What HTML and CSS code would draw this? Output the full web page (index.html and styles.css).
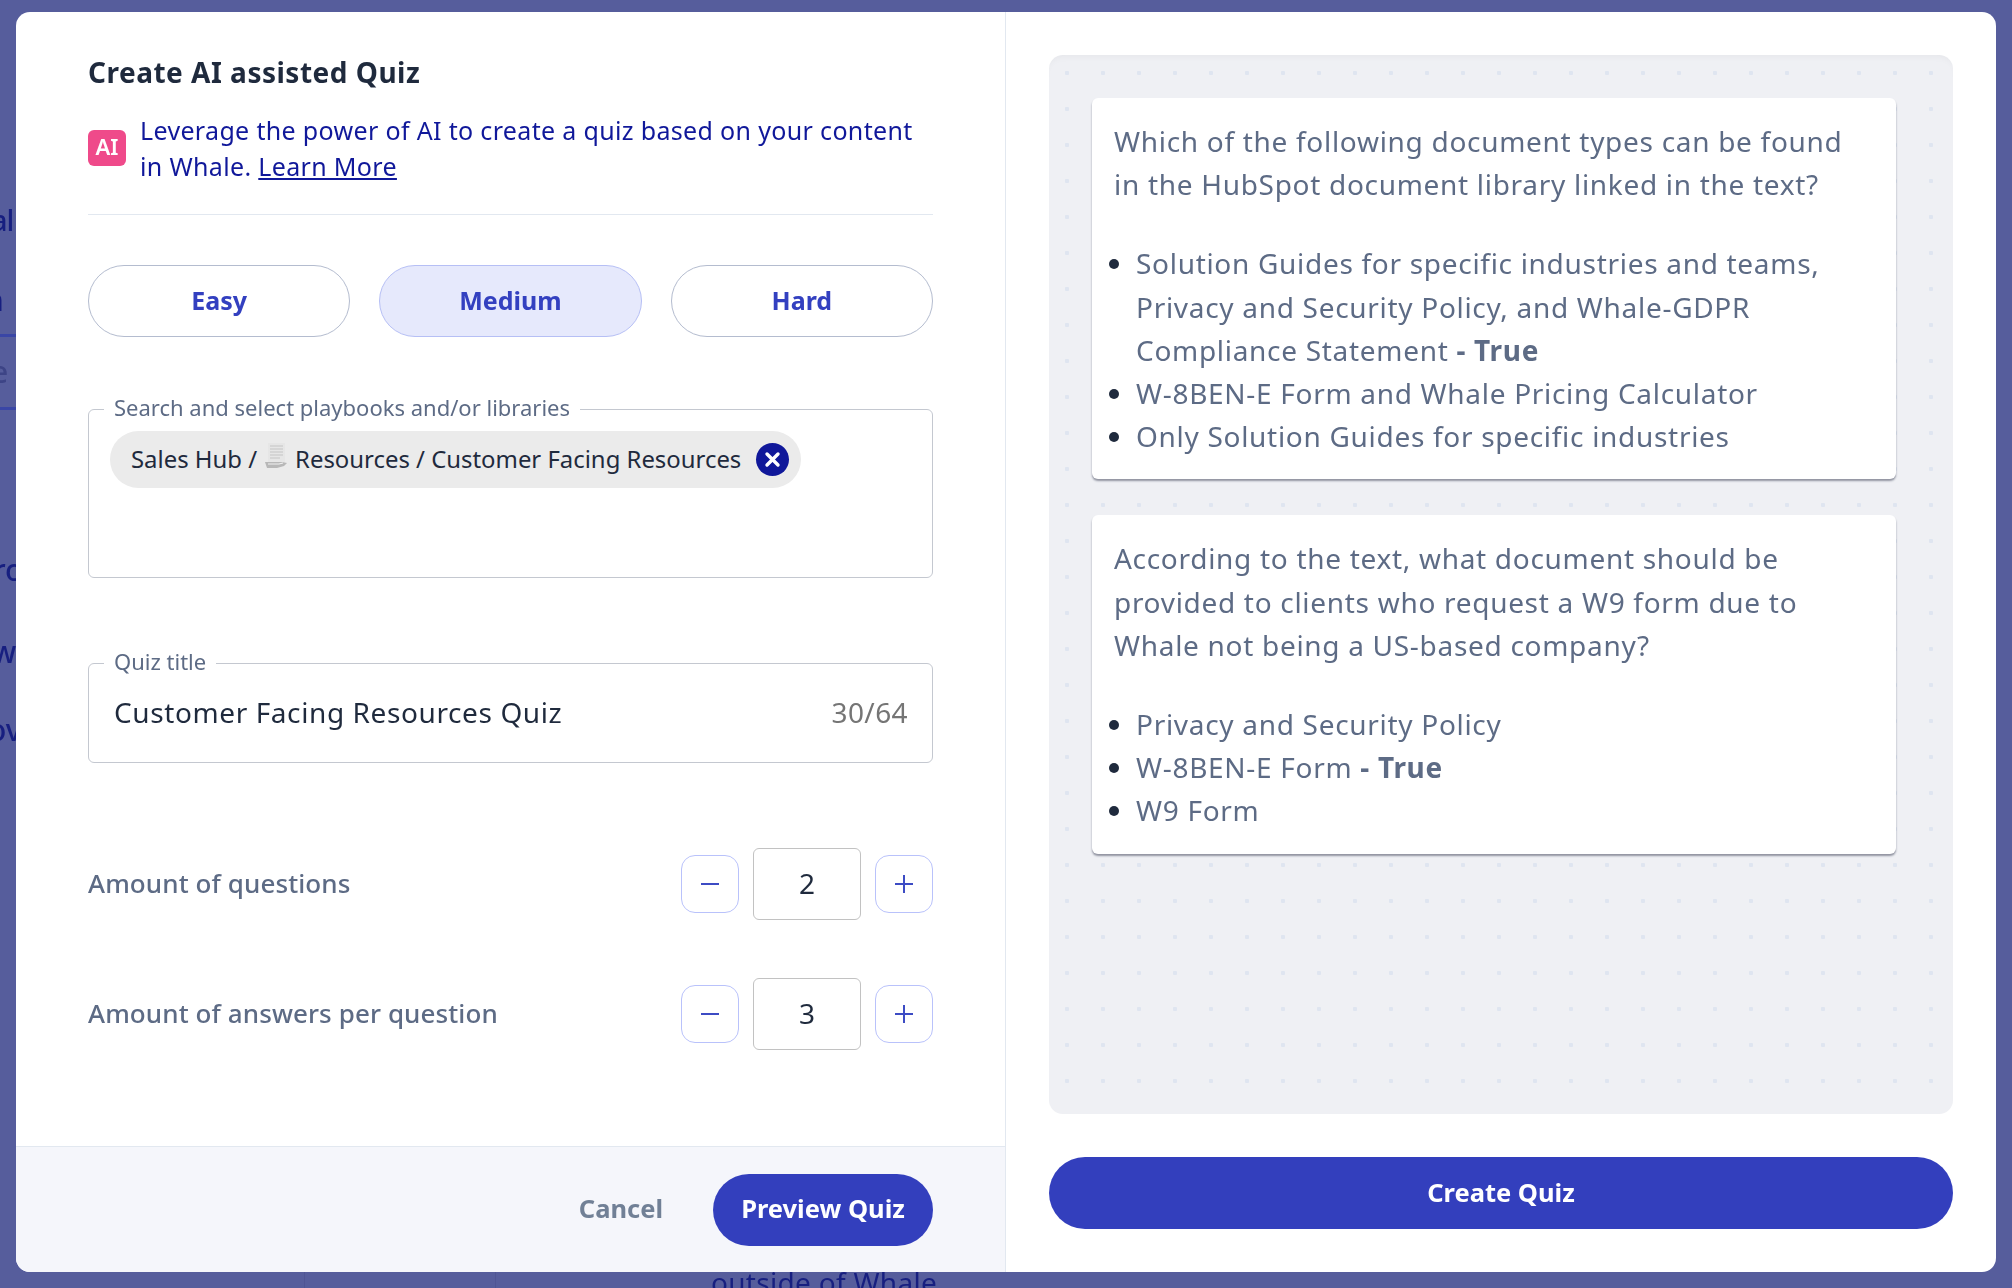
FILE: index.html
```html
<!DOCTYPE html>
<html lang="en">
<head>
    <meta charset="UTF-8">
    <meta name="viewport" content="width=device-width, initial-scale=1.0">
    <title>Create AI assisted Quiz</title>
    <link rel="stylesheet" href="styles.css">
</head>
<body>
    <div class="backdrop">
        <span class="peek peek-al">al</span>
        <span class="peek peek-n">n</span>
        <span class="peek peek-e">e</span>
        <span class="peek peek-ro">ro</span>
        <span class="peek peek-w">w</span>
        <span class="peek peek-ov">ov</span>
        <span class="peek peek-outside">outside of Whale</span>
        <i class="peek-line line-1"></i>
        <i class="peek-line line-2"></i>
        <i class="peek-rule rule-1"></i>
        <i class="peek-rule rule-2"></i>
    </div>
    <div class="modal">
        <div class="left-panel">
            <div class="form">
                <h1 class="title">Create AI assisted Quiz</h1>
                <div class="intro">
                    <span class="ai-badge">AI</span>
                    <p>Leverage the power of AI to create a quiz based on your content in Whale. <a href="#">Learn More</a></p>
                </div>
                <div class="levels">
                    <button class="level">Easy</button>
                    <button class="level selected">Medium</button>
                    <button class="level">Hard</button>
                </div>
                <div class="field field-search">
                    <label class="field-label">Search and select playbooks and/or libraries</label>
                    <span class="chip">
                        Sales Hub /
                        <svg class="scroll-icon" viewBox="0 0 22 25" width="22" height="25">
                            <path d="M3 0h17v19H3z" fill="#e6e6e6"/>
                            <path d="M5 3h13M5 6h13M5 9h13M5 12h13M5 15h10" stroke="#cfcfcf" stroke-width="1.3"/>
                            <path d="M0 19h17l5 1-3 3-7 2H2z" fill="#b8b8b8"/>
                            <path d="M3 21h11l4-1" stroke="#f0f0f0" stroke-width="1.2" fill="none"/>
                        </svg>
                        Resources / Customer Facing Resources
                        <span class="chip-close">
                            <svg viewBox="0 0 33 33" width="33" height="33">
                                <path d="M11 11l11 11M22 11L11 22" stroke="#fff" stroke-width="3.4" stroke-linecap="round"/>
                            </svg>
                        </span>
                    </span>
                </div>
                <div class="field field-title">
                    <label class="field-label">Quiz title</label>
                    <span class="field-value">Customer Facing Resources Quiz</span>
                    <span class="field-count">30/64</span>
                </div>
                <div class="amount amount-first">
                    <span class="amount-label">Amount of questions</span>
                    <div class="stepper">
                        <button class="step"><svg viewBox="0 0 20 20" width="20" height="20"><path d="M1 10h18" stroke="#3d4cc4" stroke-width="2"/></svg></button>
                        <span class="step-value">2</span>
                        <button class="step"><svg viewBox="0 0 20 20" width="20" height="20"><path d="M1 10h18M10 1v18" stroke="#3d4cc4" stroke-width="2"/></svg></button>
                    </div>
                </div>
                <div class="amount">
                    <span class="amount-label">Amount of answers per question</span>
                    <div class="stepper">
                        <button class="step"><svg viewBox="0 0 20 20" width="20" height="20"><path d="M1 10h18" stroke="#3d4cc4" stroke-width="2"/></svg></button>
                        <span class="step-value">3</span>
                        <button class="step"><svg viewBox="0 0 20 20" width="20" height="20"><path d="M1 10h18M10 1v18" stroke="#3d4cc4" stroke-width="2"/></svg></button>
                    </div>
                </div>
            </div>
            <div class="footer">
                <button class="cancel">Cancel</button>
                <button class="primary preview">Preview Quiz</button>
            </div>
        </div>
        <div class="right-panel">
            <div class="preview-area">
                <div class="card">
                    <p>Which of the following document types can be found in the HubSpot document library linked in the text?</p>
                    <ul>
                        <li>Solution Guides for specific industries and teams, Privacy and Security Policy, and Whale-GDPR Compliance Statement <b>- True</b></li>
                        <li>W-8BEN-E Form and Whale Pricing Calculator</li>
                        <li>Only Solution Guides for specific industries</li>
                    </ul>
                </div>
                <div class="card">
                    <p>According to the text, what document should be provided to clients who request a W9 form due to Whale not being a US-based company?</p>
                    <ul>
                        <li>Privacy and Security Policy</li>
                        <li>W-8BEN-E Form <b>- True</b></li>
                        <li>W9 Form</li>
                    </ul>
                </div>
            </div>
            <button class="primary create">Create Quiz</button>
        </div>
    </div>
</body>
</html>
```

FILE: styles.css
```css
* {
    box-sizing: border-box;
}

html, body {
    height: 100%;
}

body {
    font-family: "Noto Sans", sans-serif;
    background-color: #565d9c;
    color: #1f2a3d;
    margin: 0;
    padding: 12px 16px 16px;
    overflow: hidden;
}

button {
    font-family: inherit;
    cursor: pointer;
}

/* page behind the overlay */
.backdrop {
    position: fixed;
    inset: 0;
    overflow: hidden;
}

.peek {
    position: absolute;
    color: #171f80;
    font-size: 30px;
    line-height: 36px;
    font-weight: 500;
    white-space: nowrap;
}

.peek-al { left: -9px; top: 202px; font-size: 29px; letter-spacing: -1px; }
.peek-n { left: -15px; top: 282px; }
.peek-e { left: -9px; top: 354px; color: #3d4486; }
.peek-ro { left: -7px; top: 552px; }
.peek-w { left: -8px; top: 634px; }
.peek-ov { left: -12px; top: 712px; }
.peek-outside { left: 711px; top: 1264px; font-size: 28px; font-weight: 400; letter-spacing: 0.3px; }

.peek-line {
    position: absolute;
    left: 0;
    width: 16px;
    height: 3px;
    background-color: #3a46a6;
}

.line-1 { top: 334px; }
.line-2 { top: 407px; }

.peek-rule {
    position: absolute;
    top: 1272px;
    width: 1px;
    height: 16px;
    background-color: #4f5594;
}

.rule-1 { left: 304px; }
.rule-2 { left: 495px; }

.modal {
    position: relative;
    display: flex;
    width: 1980px;
    height: 1260px;
    background-color: white;
    border-radius: 14px;
    overflow: hidden;
}

.left-panel {
    width: 990px;
    display: flex;
    flex-direction: column;
    border-right: 1px solid #e2e8f0;
}

.form {
    flex: 1;
    padding: 42px 72px 0;
}

.title {
    margin: 0;
    font-size: 28px;
    line-height: 36px;
    font-weight: 700;
    letter-spacing: 0.5px;
}

.intro {
    display: flex;
    align-items: center;
    gap: 14px;
    margin-top: 22px;
    padding-bottom: 30px;
    border-bottom: 1px solid #e2e8f0;
    color: #10189a;
    font-size: 25px;
    letter-spacing: 0.34px;
    line-height: 36px;
}

.intro p {
    margin: 0;
}

.intro a {
    color: inherit;
}

.ai-badge {
    flex: none;
    width: 38px;
    height: 36px;
    border-radius: 6px;
    background-color: #ef4a8a;
    color: white;
    font-size: 22px;
    font-weight: 600;
    line-height: 33px;
    letter-spacing: 0;
    text-align: center;
}

.levels {
    display: flex;
    gap: 29px;
    margin-top: 50px;
}

.level {
    flex: 1;
    height: 72px;
    padding: 0 0 3px;
    border: 1px solid #b4bccf;
    border-radius: 36px;
    background-color: white;
    color: #3340c0;
    font-size: 25px;
    font-weight: 700;
}

.level.selected {
    background-color: #e6e9fc;
    border-color: #b6bff5;
}

.field {
    position: relative;
    border: 1px solid #c4c8d0;
    border-radius: 6px;
}

.field-label {
    position: absolute;
    left: 15px;
    top: -16px;
    padding: 0 10px;
    background-color: white;
    color: #5d6b85;
    font-size: 22px;
    line-height: 26px;
}

.field-search {
    height: 169px;
    margin-top: 72px;
    padding: 21px;
}

.chip {
    display: inline-flex;
    align-items: center;
    gap: 8px;
    height: 57px;
    padding: 0 12px 3px 21px;
    border-radius: 29px;
    background-color: #ebebeb;
    font-size: 23.9px;
    white-space: nowrap;
}

.scroll-icon {
    margin-top: -6px;
}

.chip-close {
    display: flex;
    width: 33px;
    height: 33px;
    margin: 3px 0 0 7px;
    border-radius: 50%;
    background-color: #10189a;
}

.field-title {
    display: flex;
    align-items: center;
    justify-content: space-between;
    height: 100px;
    margin-top: 85px;
    padding: 0 24px 3px 25px;
}

.field-value {
    font-size: 28px;
    letter-spacing: 0.6px;
}

.field-count {
    color: #757575;
    font-size: 28px;
    letter-spacing: 0.4px;
}

.amount {
    display: flex;
    align-items: center;
    justify-content: space-between;
    height: 72px;
    margin-top: 58px;
}

.amount-first {
    margin-top: 85px;
}

.amount-label {
    padding-bottom: 3px;
    color: #5d6b85;
    font-size: 26px;
    font-weight: 500;
    letter-spacing: 0.1px;
}

.stepper {
    display: flex;
    align-items: center;
    gap: 14px;
}

.step {
    display: flex;
    align-items: center;
    justify-content: center;
    width: 58px;
    height: 58px;
    padding: 0;
    border: 1px solid #b9c2fb;
    border-radius: 14px;
    background-color: white;
}

.step-value {
    width: 108px;
    height: 72px;
    border: 1px solid #c2c2c2;
    border-radius: 6px;
    font-size: 28px;
    line-height: 68px;
    text-align: center;
}

.footer {
    display: flex;
    align-items: center;
    justify-content: flex-end;
    gap: 50px;
    height: 126px;
    padding-right: 72px;
    background-color: #f5f6fb;
    border-top: 1px solid #e2e8f0;
}

.cancel {
    padding: 0 0 3px;
    border: none;
    background: none;
    color: #718096;
    font-size: 25.5px;
    font-weight: 700;
}

.primary {
    height: 72px;
    padding: 0 0 3px;
    border: none;
    border-radius: 36px;
    background-color: #333fbd;
    color: white;
    font-size: 25.5px;
    font-weight: 700;
}

.preview {
    width: 220px;
}

.right-panel {
    flex: 1;
    display: flex;
    flex-direction: column;
    gap: 43px;
    padding: 43px;
}

.preview-area {
    flex: 1;
    padding: 43px 57px 0 43px;
    border-radius: 14px;
    background-color: #eff0f4;
    background-image: radial-gradient(circle, #dfe5f0 2px, transparent 2.5px);
    background-size: 36px 36px;
    box-shadow: inset 0 6px 8px -6px rgba(0, 0, 0, 0.06);
}

.card {
    padding: 22px 36px 21px 22px;
    margin-bottom: 36px;
    border-radius: 6px;
    background-color: white;
    box-shadow: 0 2px 2px rgba(30, 35, 60, 0.45);
    color: #5d6b85;
    font-size: 28px;
    letter-spacing: 0.7px;
    line-height: 43.2px;
}

.card p {
    margin: 0 0 36px;
}

.card ul {
    margin: 0;
    padding-left: 22px;
}

.card li::marker {
    color: #1f2a3d;
}

.create {
    flex: none;
    width: 100%;
}
```
